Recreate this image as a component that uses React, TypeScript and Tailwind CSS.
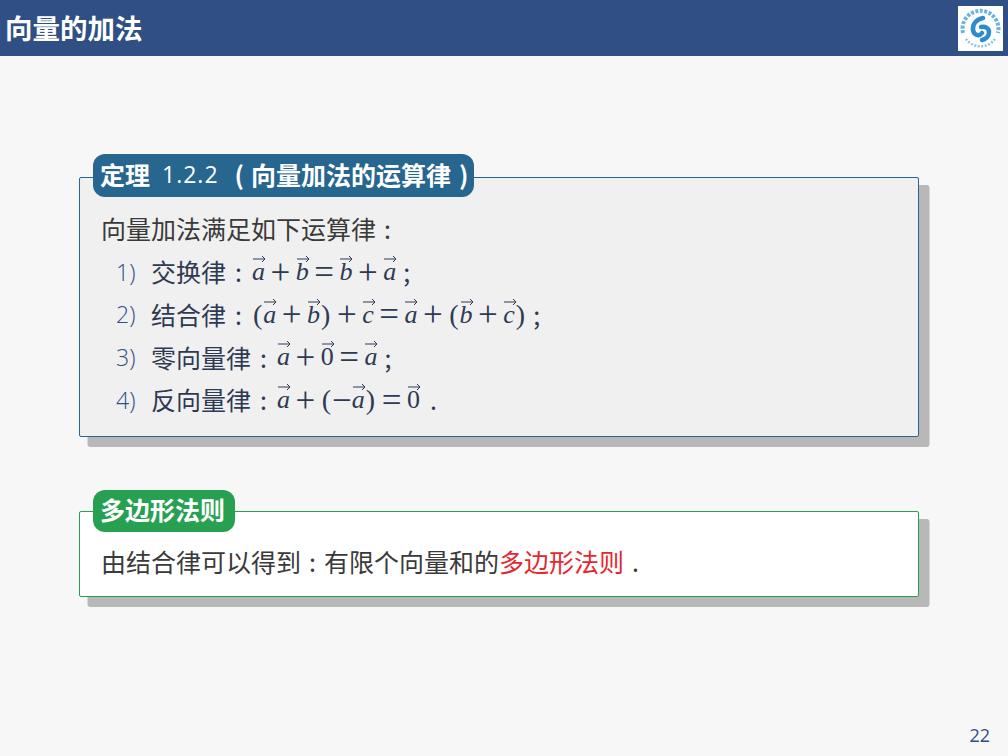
const cjk = "font-['Noto_Sans_CJK_SC','Liberation_Sans',sans-serif]"

function Vec({ c, up }: { c: string; up?: boolean }) {
  return (
    <span className={`relative inline-block font-['Liberation_Serif',serif] text-[26px] leading-none ${up ? '' : 'italic'}`}>
      {c}
      <svg className="absolute left-0 top-[-5px]" width="15" height="9" viewBox="0 0 15 9" fill="none" stroke="currentColor" strokeWidth="1">
        <path d="M1 5h12M10 2l3 3-3 3" />
      </svg>
    </span>
  )
}

function Op({ c, className = 'mx-[5.5px]' }: { c: string; className?: string }) {
  return <span className={`font-['Liberation_Serif',serif] text-[35px] font-light leading-none ${className}`}>{c}</span>
}

function Paren({ c }: { c: string }) {
  return <span className="mx-[1px] font-['Liberation_Serif',serif] text-[28px] font-light leading-none">{c}</span>
}

function Row({ n, label, children }: { n: string; label: string; children: React.ReactNode }) {
  return (
    <div className="flex h-[42.7px] items-center text-[#2e3a52]">
      <span className="w-[50px] pl-[15px] font-['Open_Sans',sans-serif] text-[23px] font-light text-[#2f4f85]">{n}</span>
      <span className={`${cjk} text-[25px]`}>{label}</span>
      <span className={`${cjk} ml-[9px] mr-[10px] text-[25px]`}>:</span>
      {children}
    </div>
  )
}

function Logo() {
  return (
    <svg width="45" height="45" viewBox="0 0 45 45" className="shrink-0">
      <rect width="45" height="45" fill="#fff" />
      <path d="M5 27A18 18 0 1 1 40 27" fill="none" stroke="#6db3dc" strokeWidth="4" strokeDasharray="3 1.5" />
      <path d="M8 33A18 18 0 0 0 37 33" fill="none" stroke="#8cc4e4" strokeWidth="2.5" strokeDasharray="2 1.5" />
      <path d="M25 12c-6 1-11 6-10 12 1 5 6 7 9 3" fill="none" stroke="#2c8ccc" strokeWidth="4.5" strokeLinecap="round" />
      <path d="M23 21c4-1 8 1 8 5s-3 7-7 8" fill="none" stroke="#2c8ccc" strokeWidth="4.5" strokeLinecap="round" />
    </svg>
  )
}

export default function App() {
  return (
    <div className={`${cjk} flex h-[756px] w-[1008px] flex-col overflow-hidden bg-[#f7f7f7]`}>
      <header className="flex h-[56px] shrink-0 items-center justify-between bg-[#2f4f85] px-[5px]">
        <h1 className="text-[27.5px] font-bold text-white">向量的加法</h1>
        <Logo />
      </header>

      <main className="flex flex-1 flex-col pl-[79px] pr-[89px] pt-[121px]">
        <section className="h-[260px] rounded-[2px] border border-[#26668f] bg-[#f0f0f0] shadow-[9.5px_9px_0_1px_#b8b8b8]">
          <div className="-mt-[24px] ml-[13px] flex h-[43px] w-[381px] items-center rounded-[12px] bg-[#26668f] pb-[2px] pl-[7px] text-[25px] font-bold text-white">
            定理
            <span className="ml-[12px] font-['Open_Sans',sans-serif] text-[23px] font-normal tracking-[1px]">1.2.2</span>
            <span className="ml-[16px]">(</span>
            <span className="ml-[7px]">向量加法的运算律</span>
            <span className="ml-[8px]">)</span>
          </div>
          <div className="pl-[21px] pt-[10px]">
            <p className="mb-[1px] flex h-[42.7px] items-center text-[25px] text-[#3a3a3a]">向量加法满足如下运算律<span className="ml-[8px]">:</span></p>
            <Row n="1)" label="交换律">
              <Vec c="a" /><Op c="+" /><Vec c="b" /><Op c="=" /><Vec c="b" /><Op c="+" /><Vec c="a" />
              <span className="ml-[7px] text-[25px]">;</span>
            </Row>
            <Row n="2)" label="结合律">
              <Paren c="(" /><Vec c="a" /><Op c="+" /><Vec c="b" /><Paren c=")" /><Op c="+" /><Vec c="c" /><Op c="=" /><Vec c="a" /><Op c="+" /><Paren c="(" /><Vec c="b" /><Op c="+" /><Vec c="c" /><Paren c=")" />
              <span className="ml-[7px] text-[25px]">;</span>
            </Row>
            <Row n="3)" label="零向量律">
              <Vec c="a" /><Op c="+" /><Vec c="0" up /><Op c="=" /><Vec c="a" />
              <span className="ml-[7px] text-[25px]">;</span>
            </Row>
            <Row n="4)" label="反向量律">
              <Vec c="a" /><Op c="+" /><Paren c="(" /><Op c="−" className="" /><Vec c="a" /><Paren c=")" /><Op c="=" /><Vec c="0" up />
              <span className="ml-[10px] text-[25px]">.</span>
            </Row>
          </div>
        </section>

        <section className="mt-[74px] h-[86px] rounded-[2px] border border-[#27a052] bg-white shadow-[9.5px_9px_0_1px_#b8b8b8]">
          <div className="-mt-[22px] ml-[13px] flex h-[42px] w-[142px] items-center rounded-[12px] bg-[#27a052] pb-[2px] pl-[7px] text-[25px] font-bold text-white">
            多边形法则
          </div>
          <p className="flex h-[60px] items-center pl-[21px] text-[25px] text-[#3a3a3a]">
            由结合律可以得到<span className="mx-[8px]">:</span>有限个向量和的<span className="text-[#e3282e]">多边形法则</span><span className="ml-[8px]">.</span>
          </p>
        </section>

        <div className="mt-auto flex justify-end pb-[7px]">
          <span className="-mr-[71px] font-['Open_Sans',sans-serif] text-[18px] text-[#2f4f85]">22</span>
        </div>
      </main>
    </div>
  )
}
